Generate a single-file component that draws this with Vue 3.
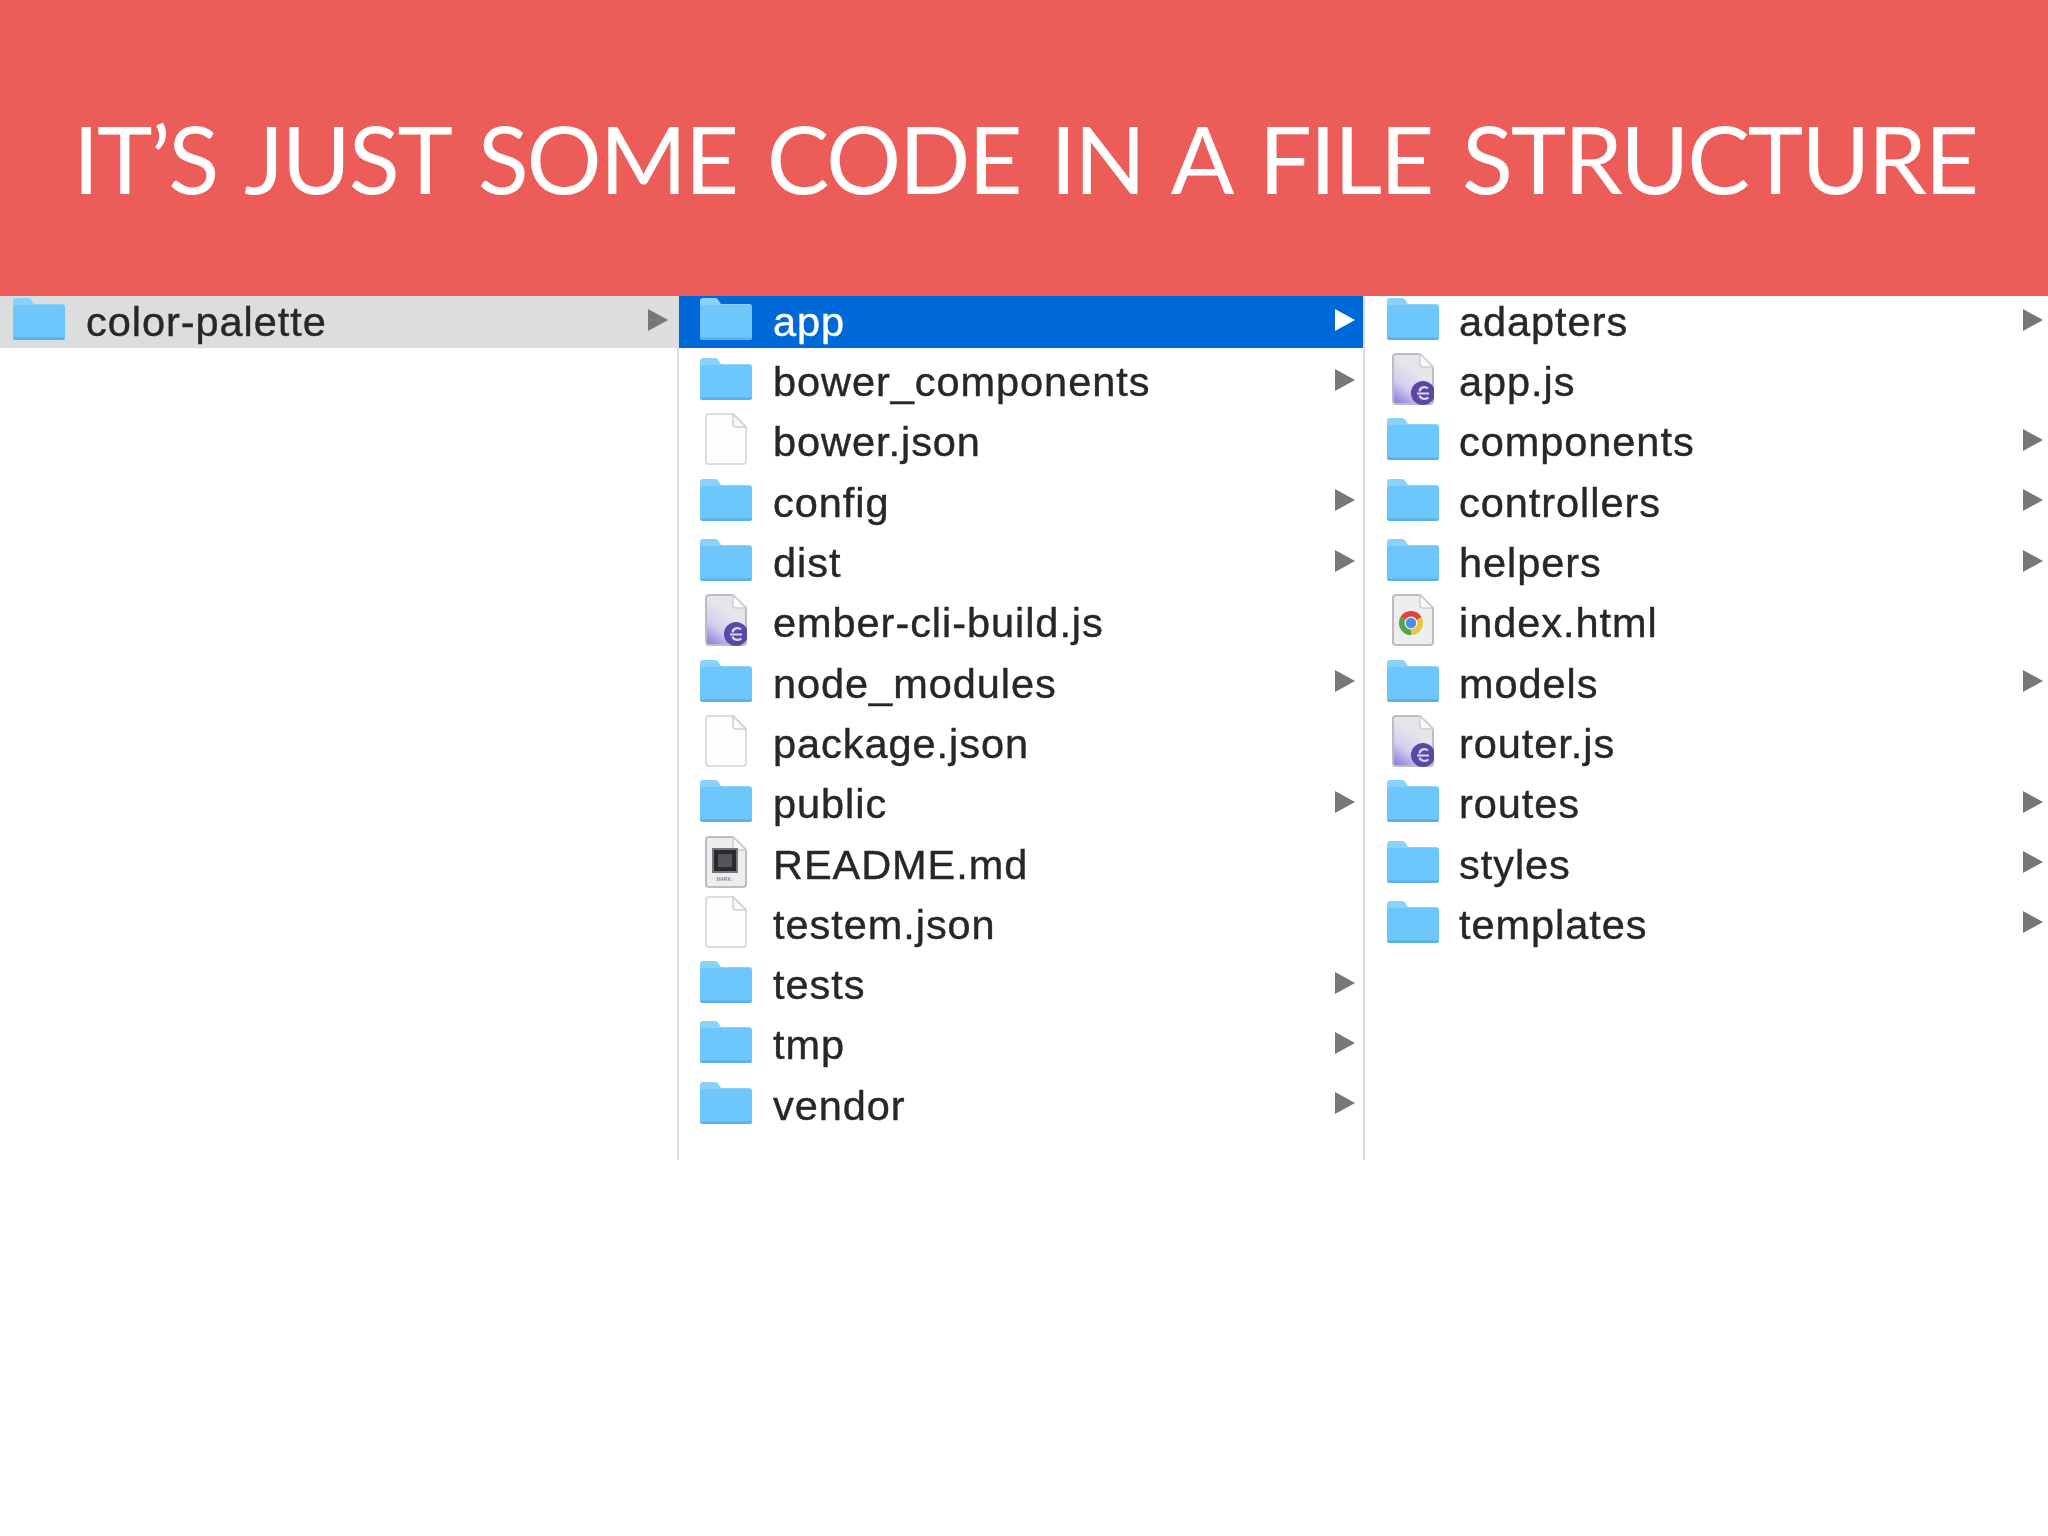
<template>
  <div class="slide">
    <header class="banner">
      <h1>IT’S JUST SOME CODE IN A FILE STRUCTURE</h1>
    </header>

    <section class="finder">
      <div v-for="col in columns" :key="col.name" class="column" :class="col.name">
        <div
          v-for="item in col.items"
          :key="item.name"
          class="row"
          :class="{ selected: item.selected, parent: item.parent }"
        >
          <span class="icon">
            <svg v-if="item.type === 'folder'" class="folder" viewBox="0 0 52 42">
              <path d="M3 0h12c2 0 3 1 4 3l2 3h28c2 0 3 1 3 3v30c0 2-1 3-3 3H3c-2 0-3-1-3-3V3c0-2 1-3 3-3z" fill="#8ad2fb" />
              <path d="M0 10c0-2 1-3 3-3h46c2 0 3 1 3 3v29c0 2-1 3-3 3H3c-2 0-3-1-3-3z" fill="#6dc7fb" />
              <path d="M0 39.500c0 1.500 1 2.500 3 2.500h46c2 0 3-1 3-2.500z" fill="#5bb1e2" />
            </svg>

            <svg v-else class="doc" viewBox="0 0 42 52">
              <defs>
                <linearGradient :id="'sheet-' + col.name + item.name" x1="0.500" y1="0.300" x2="0.100" y2="1">
                  <stop offset="0" stop-color="#e6e6ea" />
                  <stop offset="0.500" stop-color="#d6cff0" />
                  <stop offset="1" stop-color="#8f7cdc" />
                </linearGradient>
              </defs>
              <path
                d="M4 1h24l13 13v34c0 2-1 3-3 3H4c-2 0-3-1-3-3V4c0-2 1-3 3-3z"
                :fill="item.type === 'ember' ? 'url(#sheet-' + col.name + item.name + ')' : item.type === 'plain' ? '#fefefe' : '#eeeef0'"
                :stroke="item.type === 'plain' ? '#dcdcde' : '#bcbcc2'"
                stroke-width="2"
              />
              <path d="M28 1v10c0 2 1 3 3 3h10z" fill="#fafafb" stroke="#cfcfd3" stroke-width="1.500" />

              <g v-if="item.type === 'ember'">
                <circle cx="31" cy="40" r="12" fill="#5a47a8" />
                <path d="M25 40.500h12M36 35.500c-3-2.500-8-1.500-8.500 3M27.500 42.500c1 3.500 6 4.500 9 2" fill="none" stroke="#dcd6f6" stroke-width="2.200" />
              </g>

              <g v-if="item.type === 'chrome'">
                <circle cx="19" cy="29" r="12" fill="#ecc63a" />
                <path d="M19 29L8.600 23A12 12 0 0 1 29.400 23z" fill="#d6473c" />
                <path d="M19 29L8.600 23A12 12 0 0 0 19 41z" fill="#4fa84e" />
                <circle cx="19" cy="29" r="6.500" fill="#f2f2f2" />
                <circle cx="19" cy="29" r="5.200" fill="#4a8ee0" />
              </g>

              <g v-if="item.type === 'markdown'">
                <rect x="7" y="12" width="26" height="25" fill="#77777b" />
                <rect x="9" y="14" width="22" height="21" fill="#2a2a2d" />
                <rect x="13" y="18" width="14" height="13" fill="#56565a" />
                <text x="20" y="45" class="md-label">MARK↓</text>
              </g>
            </svg>
          </span>
          <span class="name">{{ item.name }}</span>
          <span v-if="item.type === 'folder'" class="arrow"></span>
        </div>
      </div>
    </section>
  </div>
</template>

<script setup>
const folder = (name, extra = {}) => ({ name, type: 'folder', ...extra })
const file = (name, type = 'plain') => ({ name, type })

const columns = [
  {
    name: 'first',
    items: [folder('color-palette', { parent: true })]
  },
  {
    name: 'second',
    items: [
      folder('app', { selected: true }),
      folder('bower_components'),
      file('bower.json'),
      folder('config'),
      folder('dist'),
      file('ember-cli-build.js', 'ember'),
      folder('node_modules'),
      file('package.json'),
      folder('public'),
      file('README.md', 'markdown'),
      file('testem.json'),
      folder('tests'),
      folder('tmp'),
      folder('vendor')
    ]
  },
  {
    name: 'third',
    items: [
      folder('adapters'),
      file('app.js', 'ember'),
      folder('components'),
      folder('controllers'),
      folder('helpers'),
      file('index.html', 'chrome'),
      folder('models'),
      file('router.js', 'ember'),
      folder('routes'),
      folder('styles'),
      folder('templates')
    ]
  }
]
</script>

<style>
html, body { margin: 0; background: #fff; }
</style>

<style scoped>
.slide {
  width: 2048px;
  height: 1536px;
  background: #fff;
  overflow: hidden;
}
.banner {
  height: 296px;
  background: #ec5d59;
  display: flex;
  align-items: center;
  padding: 18px 0 0 73px;
  box-sizing: border-box;
}
h1 {
  margin: 0;
  font-family: Lato, sans-serif;
  font-weight: 400;
  font-size: 94px;
  letter-spacing: -2.2px;
  word-spacing: 8px;
  color: #fff;
  white-space: nowrap;
}
.finder {
  display: grid;
  grid-template-columns: 679px 686px 683px;
  height: 864px;
  font-family: "Liberation Sans", sans-serif;
  font-size: 41.5px;
  letter-spacing: 0.95px;
  color: #27272a;
  -webkit-text-stroke: 0.4px;
  filter: blur(0.6px);
}
.column {
  box-sizing: border-box;
  border-right: 2px solid #dcdcde;
}
.third { border-right: 0; }
.row {
  display: flex;
  align-items: center;
  height: 60.3px;
}
.row:first-child {
  height: 52px;
  margin-bottom: 4px;
}
.selected { background: #0069d9; color: #fff; }
.parent { background: #dcdddf; }
.icon {
  width: 52px;
  height: 52px;
  margin-bottom: 6px;
  display: flex;
  align-items: center;
  justify-content: center;
  flex: none;
}
.folder { width: 52px; height: 42px; }
.doc { width: 42px; height: 52px; }
.md-label {
  font-family: "Liberation Sans", sans-serif;
  font-size: 5px;
  letter-spacing: 0;
  stroke: none;
  fill: #66666a;
  text-anchor: middle;
}
.name { white-space: nowrap; }
.arrow {
  margin: 0 0 5px auto;
  width: 0;
  height: 0;
  border-left: 20px solid #77777a;
  border-top: 11px solid transparent;
  border-bottom: 11px solid transparent;
}
.selected .arrow { border-left-color: #fff; }

.first .row { padding: 0 9px 0 13px; }
.first .icon { margin-right: 21px; }
.second .row { padding: 0 8px 0 21px; }
.second .icon { margin-right: 21px; }
.third .row { padding: 0 5px 0 22px; }
.third .icon { margin-right: 20px; }
</style>
